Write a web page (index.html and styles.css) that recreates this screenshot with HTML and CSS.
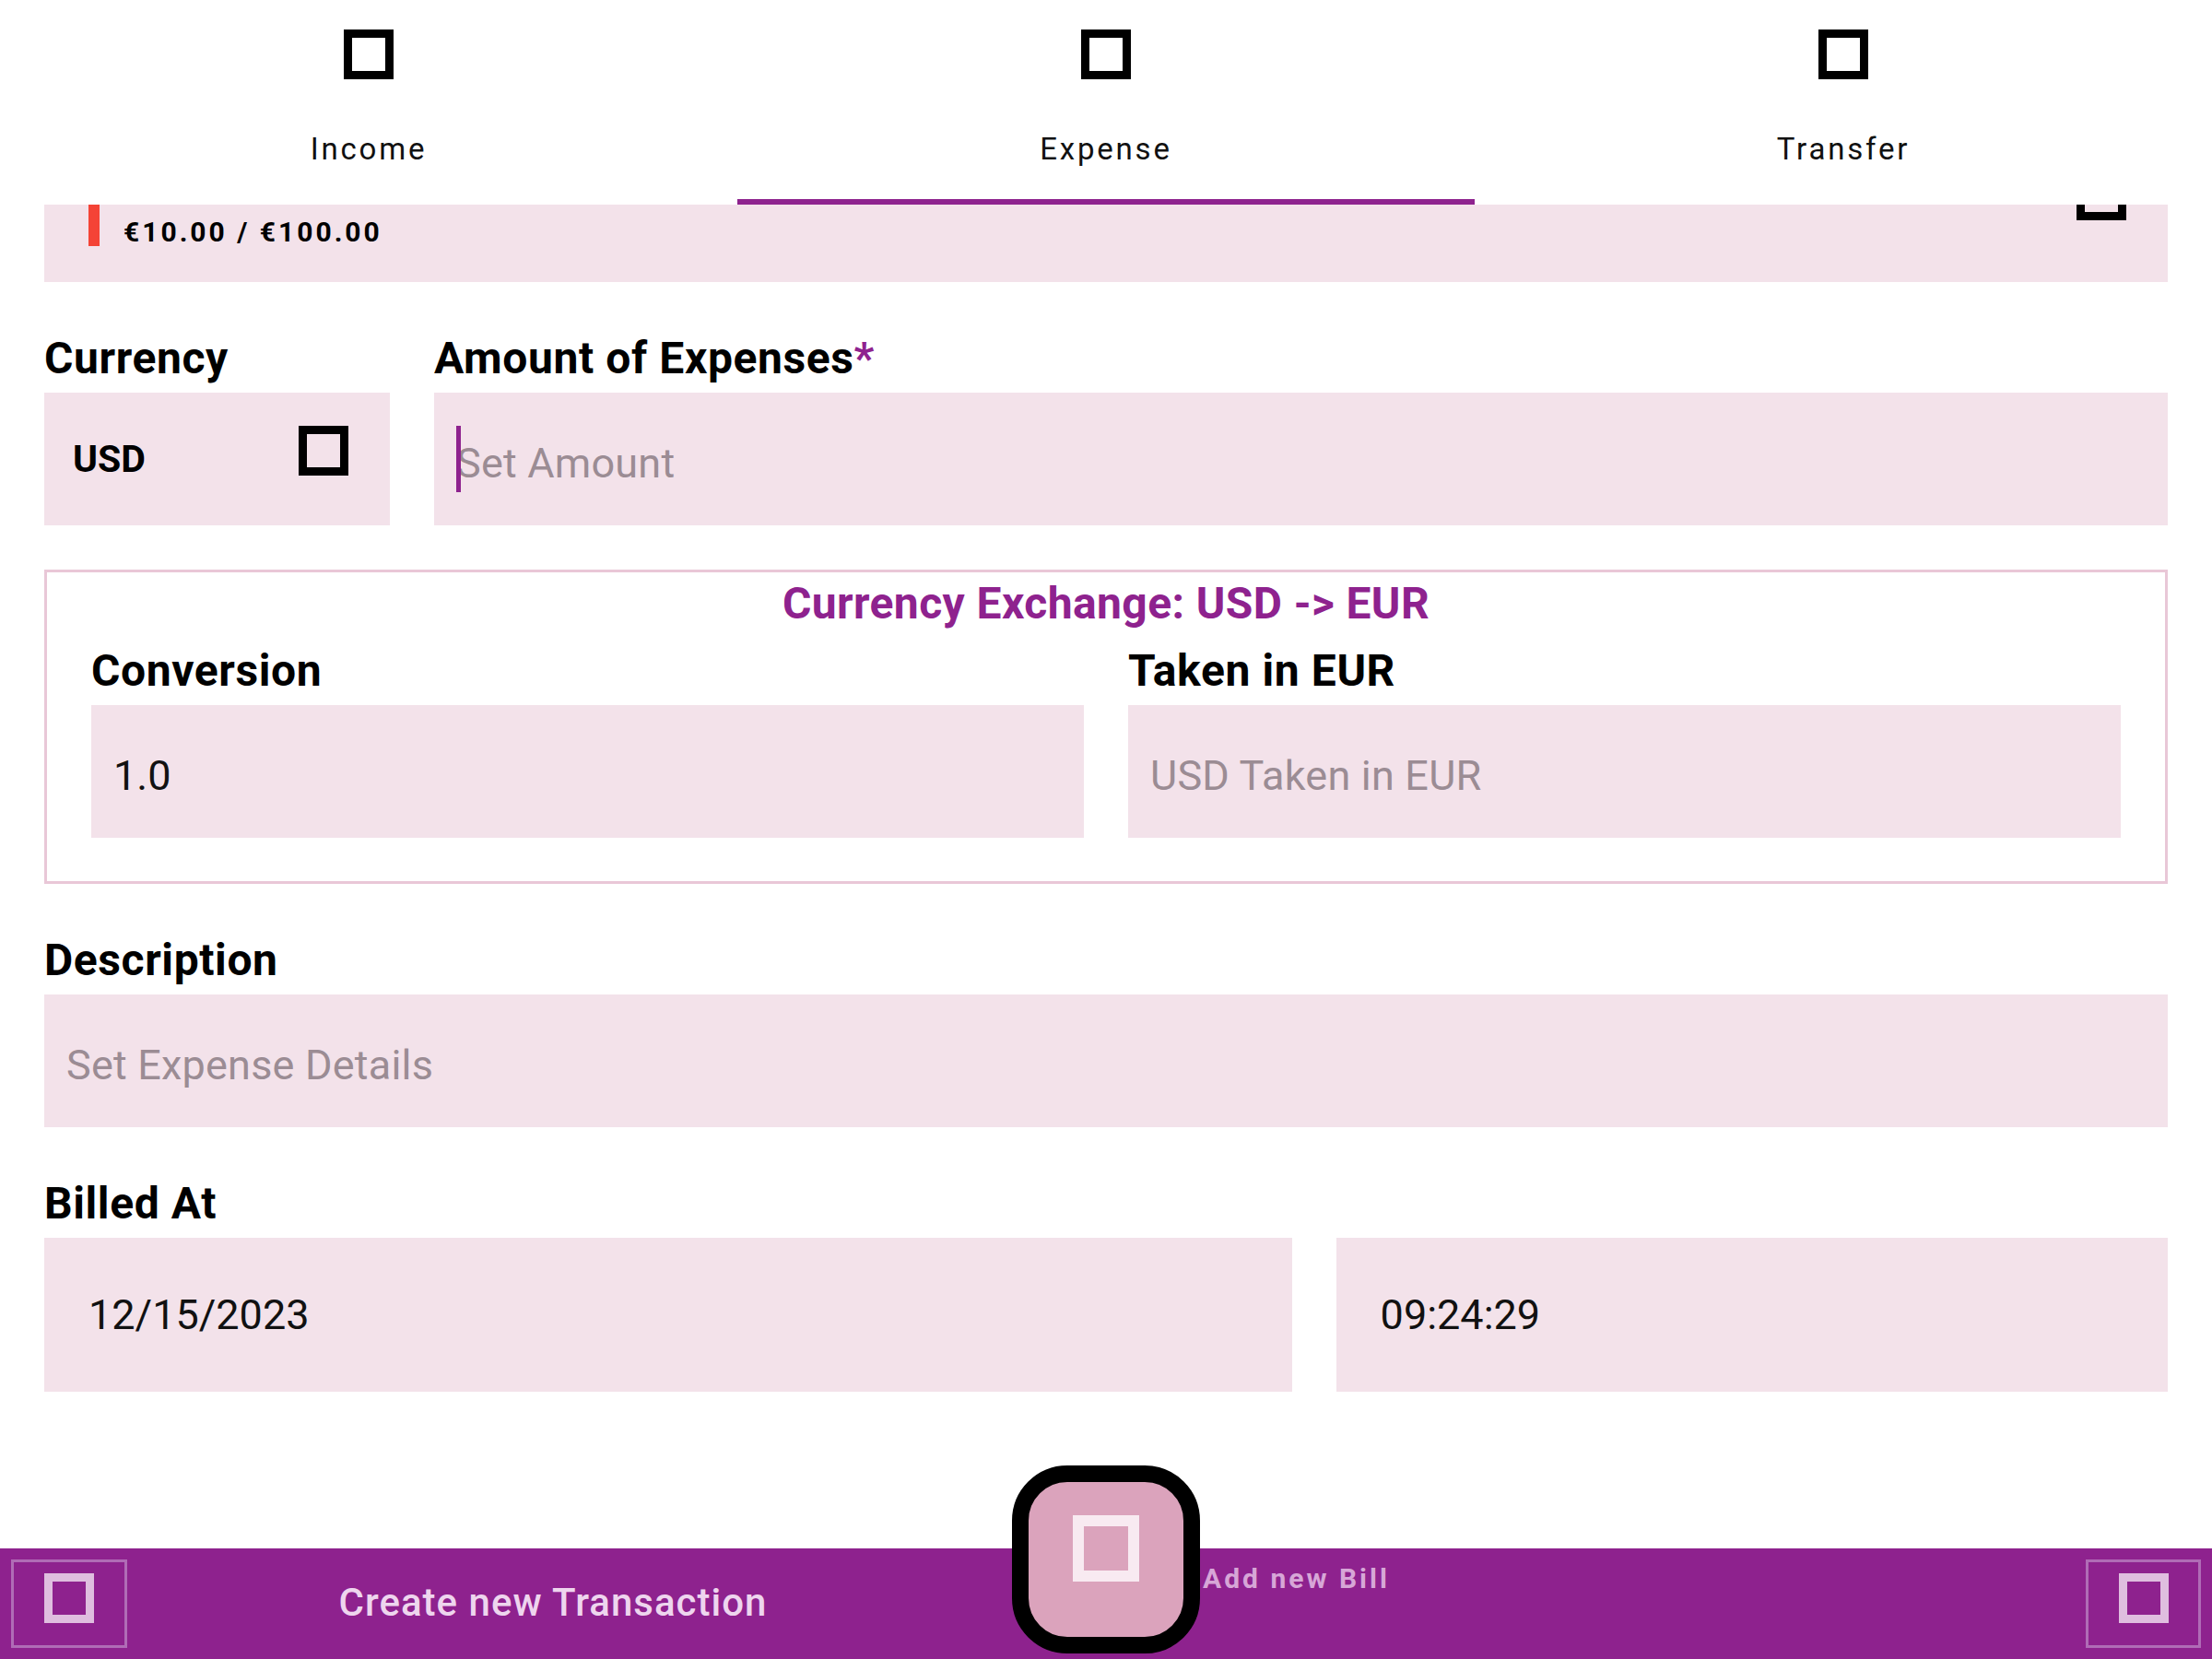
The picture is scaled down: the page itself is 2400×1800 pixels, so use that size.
FILE: index.html
```html
<!DOCTYPE html>
<html lang="en">
<head>
<meta charset="utf-8">
<title>New Transaction</title>
<link rel="stylesheet" href="styles.css">
</head>
<body>
<div class="app">
  <nav class="tabs">
    <div class="tab"><span class="tofu"></span><span class="tab-label">Income</span></div>
    <div class="tab active"><span class="tofu"></span><span class="tab-label">Expense</span></div>
    <div class="tab"><span class="tofu"></span><span class="tab-label">Transfer</span></div>
  </nav>

  <main class="content">
    <section class="budget-card">
      <div class="budget-row">
        <span class="budget-bar"></span>
        <span class="budget-text">€10.00 / €100.00</span>
        <span class="tofu budget-icon"></span>
      </div>
    </section>

    <div class="row row-first">
      <div class="field field-currency">
        <label class="label">Currency</label>
        <div class="input select">
          <span class="select-value">USD</span>
          <span class="tofu select-icon"></span>
        </div>
      </div>
      <div class="field field-grow">
        <label class="label">Amount of Expenses<span class="req">*</span></label>
        <div class="input input-text"><span class="caret"></span><span class="placeholder">Set Amount</span></div>
      </div>
    </div>

    <section class="exchange">
      <div class="exchange-title">Currency Exchange: USD -&gt; EUR</div>
      <div class="row exchange-row">
        <div class="field field-grow">
          <label class="label">Conversion</label>
          <div class="input input-text"><span class="value">1.0</span></div>
        </div>
        <div class="field field-grow">
          <label class="label">Taken in EUR</label>
          <div class="input input-text"><span class="placeholder">USD Taken in EUR</span></div>
        </div>
      </div>
    </section>

    <div class="field field-block">
      <label class="label">Description</label>
      <div class="input input-text"><span class="placeholder">Set Expense Details</span></div>
    </div>

    <div class="field field-block">
      <label class="label">Billed At</label>
      <div class="date-row">
        <div class="input input-date"><span class="value">12/15/2023</span></div>
        <div class="input input-date"><span class="value">09:24:29</span></div>
      </div>
    </div>
  </main>

  <footer class="bottom-bar">
    <div class="bar-left">
      <div class="bar-btn"><span class="tofu tofu-light"></span></div>
      <div class="create-text">Create new Transaction</div>
      <div></div>
    </div>
    <div class="bar-right">
      <div class="bill-text">Add new Bill</div>
      <div class="bar-btn bar-btn-right"><span class="tofu tofu-light"></span></div>
    </div>
  </footer>

  <button class="fab" type="button"><span class="fab-icon"></span></button>
</div>
</body>
</html>
```

FILE: styles.css
```css
* {
  box-sizing: border-box;
  margin: 0;
  padding: 0;
}

html, body {
  width: 2400px;
  height: 1800px;
  background: #ffffff;
}

body {
  font-family: Roboto, "Liberation Sans", sans-serif;
  color: #000000;
  overflow: hidden;
}

.app {
  position: relative;
  width: 2400px;
  height: 1800px;
  display: flex;
  flex-direction: column;
}

/* ---------- generic "missing glyph" icon ---------- */
.tofu {
  display: block;
  flex: none;
  width: 54px;
  height: 54px;
  border: 9px solid #000000;
}

/* ---------- tabs ---------- */
.tabs {
  display: flex;
  flex: none;
  height: 222px;
  background: #ffffff;
}

.tab {
  flex: 1;
  display: flex;
  flex-direction: column;
  align-items: center;
  padding-top: 32px;
}

.tab.active {
  border-bottom: 6px solid #8e228e;
}

.tab-label {
  margin-top: 56px;
  font-size: 33px;
  line-height: 40px;
  letter-spacing: 2.8px;
  color: #111111;
}

/* ---------- content ---------- */
.content {
  padding: 0 48px;
  flex: none;
}

.budget-card {
  height: 84px;
  overflow: hidden;
  background: #f3e2ea;
  padding: 0 45px 0 48px;
}

.budget-row {
  display: flex;
  align-items: flex-start;
  margin-top: -37px;
}

.budget-bar {
  width: 12px;
  height: 82px;
  background: #f44336;
  flex: none;
}

.budget-text {
  margin-left: 26px;
  margin-top: 49px;
  font-size: 30px;
  line-height: 36px;
  font-weight: 700;
  letter-spacing: 3px;
}

.budget-icon {
  margin-left: auto;
}

.row {
  display: flex;
  gap: 48px;
}

.row-first {
  margin-top: 55px;
}

.field-currency {
  width: 375px;
  flex: none;
}

.field-grow {
  flex: 1 1 0;
  min-width: 0;
}

.label {
  display: block;
  font-size: 48px;
  line-height: 56px;
  font-weight: 700;
  letter-spacing: 0.6px;
  margin-bottom: 9px;
}

.req {
  color: #8e228e;
}

.input {
  height: 144px;
  background: #f3e2ea;
  display: flex;
  align-items: center;
  font-size: 45px;
}

.input-text {
  padding: 9px 24px 0;
}

.placeholder {
  color: #9b8c94;
  letter-spacing: 0.2px;
}

.value {
  color: #111111;
}

.caret {
  display: block;
  width: 5px;
  height: 72px;
  background: #8e228e;
  margin-right: -5px;
  margin-top: -9px;
  flex: none;
  position: relative;
  z-index: 1;
}

.select {
  justify-content: space-between;
  padding: 0 45px 0 31px;
  font-size: 41px;
  font-weight: 700;
  letter-spacing: 0;
}

.select-icon {
  margin-bottom: 18px;
}

/* ---------- exchange box ---------- */
.exchange {
  margin-top: 48px;
  border: 3px solid #e9c7d7;
  padding: 6px 48px 47px;
}

.exchange-title {
  text-align: center;
  color: #8e228e;
  font-size: 48px;
  line-height: 56px;
  font-weight: 700;
  letter-spacing: 0.4px;
}

.exchange-row {
  margin-top: 17px;
}

.field-block {
  margin-top: 55px;
}

.date-row {
  display: grid;
  grid-template-columns: 3fr 2fr;
  gap: 48px;
}

.input-date {
  height: 167px;
  padding: 0 48px;
}

/* ---------- bottom bar ---------- */
.bottom-bar {
  margin-top: auto;
  height: 120px;
  flex: none;
  background: #8e228e;
  display: flex;
}

.bar-left {
  width: 1200px;
  display: grid;
  grid-template-columns: 1fr auto 1fr;
  align-items: start;
}

.bar-btn {
  width: 126px;
  height: 96px;
  margin: 12px 0 0 12px;
  border: 3px solid #b06cb6;
  display: flex;
  justify-content: center;
  padding-top: 12px;
}

.tofu-light {
  border-color: #dfbedf;
}

.create-text {
  margin-top: 34px;
  font-size: 42px;
  line-height: 50px;
  font-weight: 500;
  letter-spacing: 1px;
  color: #eed5ee;
}

.bar-right {
  flex: 1;
  display: flex;
  align-items: flex-start;
}

.bill-text {
  margin: 15px 0 0 105px;
  font-size: 30px;
  line-height: 36px;
  font-weight: 700;
  letter-spacing: 3px;
  color: #d7a6d7;
}

.bar-btn-right {
  margin: 12px 12px 0 auto;
  width: 125px;
}

/* ---------- floating action button ---------- */
.fab {
  position: absolute;
  left: 1098px;
  top: 1590px;
  width: 204px;
  height: 204px;
  border: 18px solid #000000;
  border-radius: 60px;
  background: #dba3bc;
  display: flex;
  justify-content: center;
  align-items: flex-start;
  padding-top: 36px;
  cursor: pointer;
}

.fab-icon {
  display: block;
  width: 72px;
  height: 72px;
  border: 12px solid #f8eaf1;
}
```
